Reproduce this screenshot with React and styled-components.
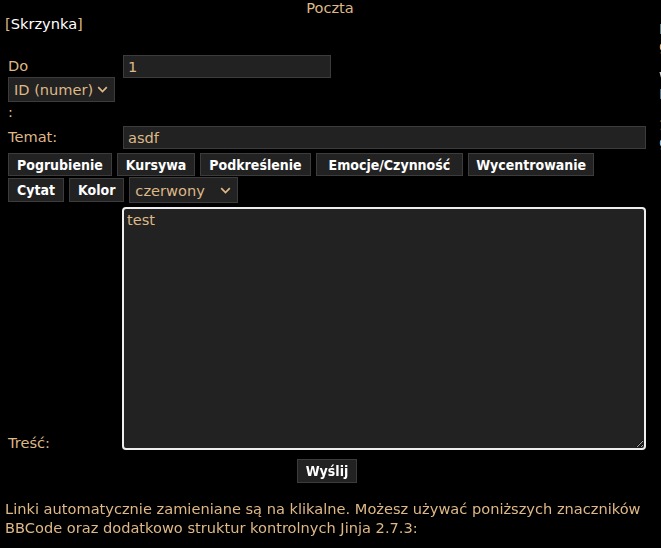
import React, { useState } from "react";
import styled, { createGlobalStyle } from "styled-components";

const GlobalStyle = createGlobalStyle`
  html, body {
    margin: 0;
    padding: 0;
    background: #000;
    overflow: hidden;
  }
  body {
    font-family: "DejaVu Sans", sans-serif;
    font-size: 14.6px;
    color: #deb887;
  }
`;

const Page = styled.div`
  display: flex;
  width: 720px;
`;

const Main = styled.div`
  width: 652px;
  flex-shrink: 0;
`;

const Sidebar = styled.div`
  padding-left: 7px;
  display: flex;
  flex-direction: column;
  line-height: 17px;
  padding-top: 20px;
`;

const SideLine = styled.span`
  color: ${p => p.color};
  margin-top: ${p => p.gap || 0}px;
`;

const Title = styled.div`
  text-align: center;
  line-height: 15px;
  margin-left: 8px;
`;

const BoxLink = styled.div`
  padding-left: 5px;
  line-height: 18px;
  a {
    color: #fff;
    text-decoration: none;
  }
`;

const Form = styled.div`
  display: grid;
  grid-template-columns: 115px 523px;
  width: 638px;
  padding-left: 8px;
  margin-top: 22px;
  row-gap: 4px;
`;

const LabelCell = styled.div`
  display: flex;
  flex-direction: column;
  align-items: flex-start;
  justify-content: ${p => (p.bottom ? "flex-end" : "flex-start")};
  line-height: ${p => p.lh || 22}px;
`;

const Colon = styled.span`
  line-height: 20px;
`;

const FieldCell = styled.div`
  display: flex;
  align-items: flex-start;
`;

const FullRow = styled.div`
  grid-column: 1 / span 2;
  display: flex;
  flex-wrap: wrap;
  align-items: center;
  gap: 1px 5px;
  justify-content: ${p => (p.center ? "center" : "flex-start")};
  margin-top: ${p => p.mt || 0}px;
`;

const TextInput = styled.input`
  box-sizing: border-box;
  width: ${p => p.w}px;
  height: 23px;
  background: #222;
  border: 1px solid #3c3c3c;
  color: #deb887;
  font: inherit;
  padding: 0 4px;
  outline: none;
`;

const Select = styled.select`
  appearance: none;
  box-sizing: border-box;
  width: ${p => p.w}px;
  height: ${p => p.h || 25}px;
  background: #222
    url("data:image/svg+xml;utf8,<svg xmlns='http://www.w3.org/2000/svg' width='11' height='7' viewBox='0 0 11 7'><path d='M1.2 1.2 L5.5 5.5 L9.8 1.2' fill='none' stroke='%23deb887' stroke-width='1.7'/></svg>")
    no-repeat right 6px center;
  border: 1px solid #3c3c3c;
  color: #deb887;
  font: inherit;
  padding: 0 16px 0 5px;
  outline: none;
`;

const Button = styled.button`
  box-sizing: border-box;
  height: ${p => p.h || 24}px;
  background: #222;
  border: 1px solid #3c3c3c;
  color: #fff;
  font-family: "DejaVu Sans Condensed", "DejaVu Sans", sans-serif;
  font-size: 14px;
  font-weight: 700;
  padding: 0 ${p => p.px || 8}px;
  cursor: pointer;
`;

const TextArea = styled.textarea`
  box-sizing: border-box;
  width: 524px;
  height: 243px;
  margin-left: -1px;
  background: #222;
  border: 2px solid #eee;
  border-radius: 4px;
  color: #deb887;
  font: inherit;
  padding: 2px 3px;
  resize: both;
  outline: none;
  caret-color: #deb887;
`;

const Info = styled.p`
  margin: 16px 0 0 5px;
  line-height: 19px;
  width: 645px;
`;

const formatButtons = [
  { label: "Pogrubienie", px: 8 },
  { label: "Kursywa", px: 8 },
  { label: "Podkreślenie", px: 8 },
  { label: "Emocje/Czynność", px: 12 },
  { label: "Wycentrowanie", px: 7 },
];

export default function App() {
  const [to, setTo] = useState("1");
  const [subject, setSubject] = useState("asdf");
  const [body, setBody] = useState("test");

  return (
    <>
      <GlobalStyle />
      <Page>
        <Main>
          <Title>Poczta</Title>
          <BoxLink>
            [<a href="#">Skrzynka</a>]
          </BoxLink>
          <Form>
            <LabelCell>
              <span>Do</span>
              <Select w={107} defaultValue="id">
                <option value="id">ID (numer)</option>
                <option value="nick">Nick</option>
              </Select>
              <Colon>:</Colon>
            </LabelCell>
            <FieldCell>
              <TextInput w={208} value={to} onChange={e => setTo(e.target.value)} />
            </FieldCell>

            <LabelCell>
              <span>Temat:</span>
            </LabelCell>
            <FieldCell>
              <TextInput w={523} value={subject} onChange={e => setSubject(e.target.value)} />
            </FieldCell>

            <FullRow>
              {formatButtons.map(b => (
                <Button key={b.label} h={23} px={b.px}>
                  {b.label}
                </Button>
              ))}
              <Button h={24}>Cytat</Button>
              <Button h={24}>Kolor</Button>
              <Select w={109} h={26} defaultValue="red">
                <option value="red">czerwony</option>
                <option value="green">zielony</option>
                <option value="blue">niebieski</option>
              </Select>
            </FullRow>

            <LabelCell bottom lh={14}>
              <span>Treść:</span>
            </LabelCell>
            <FieldCell>
              <TextArea autoFocus value={body} onChange={e => setBody(e.target.value)} />
            </FieldCell>

            <FullRow center mt={5}>
              <Button h={24}>Wyślij</Button>
            </FullRow>
          </Form>
          <Info>
            Linki automatycznie zamieniane są na klikalne. Możesz używać poniższych
            znaczników BBCode oraz dodatkowo struktur kontrolnych Jinja 2.7.3:
          </Info>
        </Main>
        <Sidebar>
          <SideLine color="#9cc">I</SideLine>
          <SideLine color="#deb887">g</SideLine>
          <SideLine color="#ccc" gap={14}>W</SideLine>
          <SideLine color="#8bd">I</SideLine>
          <SideLine color="#deb887" gap={14}>1</SideLine>
          <SideLine color="#8bd">g</SideLine>
        </Sidebar>
      </Page>
    </>
  );
}
